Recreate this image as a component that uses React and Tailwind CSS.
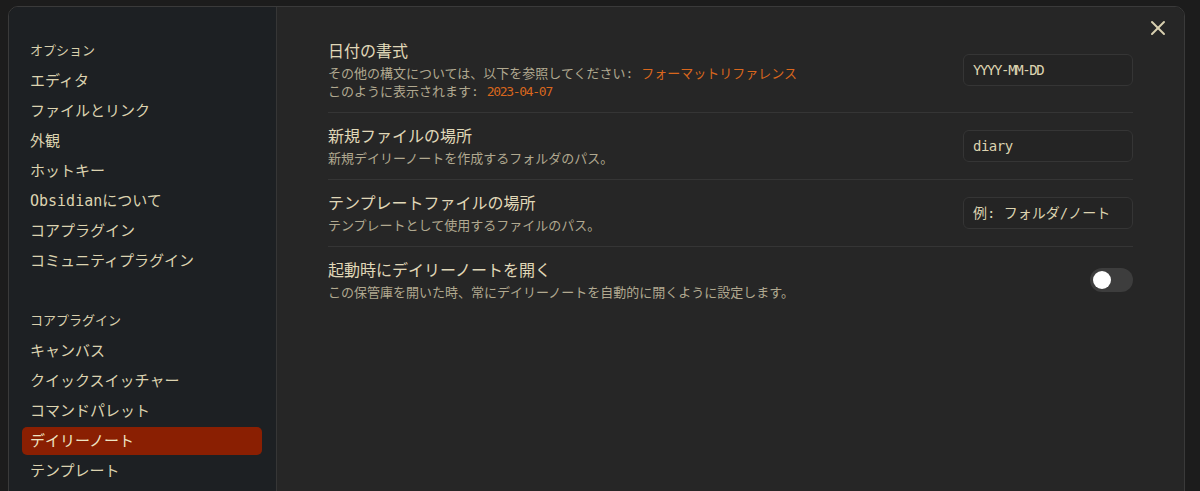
import React from "react";
import { X } from "lucide-react";

const FONT = { fontFamily: '"DejaVu Sans Mono", "Noto Sans CJK JP", monospace' };

const optionItems = ["エディタ", "ファイルとリンク", "外観", "ホットキー", "Obsidianについて", "コアプラグイン", "コミュニティプラグイン"];
const pluginItems = ["キャンバス", "クイックスイッチャー", "コマンドパレット", "デイリーノート", "テンプレート"];

const NavHeader = ({ children }) => (
  <div className="h-[28px] mb-[2px] pl-2 flex items-center text-[13px] text-[#d8cfac]">{children}</div>
);

const NavItem = ({ label, active }) => (
  <div
    className={
      active
        ? "h-[28px] mb-[2px] pl-2 flex items-center text-[15px] rounded-[5px] bg-[#8a1f02] text-[#eee5c4]"
        : "h-[28px] mb-[2px] pl-2 flex items-center text-[15px] text-[#dcd3b0]"
    }
  >
    {label}
  </div>
);

const SettingRow = ({ title, children, control, first }) => (
  <div className={first ? "flex items-center py-[11px]" : "flex items-center py-[11px] border-t border-[#353535]"}>
    <div className="flex-1">
      <div className="pt-[1px] text-[16px] leading-[24px] text-[#e0d8b8]">{title}</div>
      <div className="mt-[1px] text-[13px] leading-[18px] text-[#b1a990]">{children}</div>
    </div>
    {control}
  </div>
);

const TextBox = ({ children }) => (
  <div className="w-[170px] h-[32px] shrink-0 rounded-[6px] border border-[#353535] bg-[#242424] px-[9px] flex items-center text-[14px] text-[#dcd3b0]">
    {children}
  </div>
);

export default function App() {
  return (
    <div style={FONT} className="h-[491px] overflow-hidden bg-[#1c1c1c] pl-2 pr-[15px] pt-[6px]">
      <div className="relative flex h-[520px] rounded-t-[10px] border border-[#3a3a3a] overflow-hidden">
        <aside className="w-[268px] shrink-0 bg-[#1d2023] border-r border-[#363636] pl-[13px] pr-[14px] pt-[30px]">
          <NavHeader>オプション</NavHeader>
          {optionItems.map((l) => (
            <NavItem key={l} label={l} />
          ))}
          <div className="h-[30px]" />
          <NavHeader>コアプラグイン</NavHeader>
          {pluginItems.map((l) => (
            <NavItem key={l} label={l} active={l === "デイリーノート"} />
          ))}
        </aside>

        <main className="flex-1 bg-[#262626] px-[51px] pt-[21px]">
          <SettingRow
            first
            title="日付の書式"
            control={
              <TextBox>
                <span className="tracking-[-1.4px]">YYYY-MM-DD</span>
              </TextBox>
            }
          >
            <div>
              その他の構文については、以下を参照してください: <span className="text-[#d9661d]">フォーマットリファレンス</span>
            </div>
            <div>
              このように表示されます: <span className="text-[#d9661d] tracking-[-1.3px]">2023-04-07</span>
            </div>
          </SettingRow>
          <SettingRow
            title="新規ファイルの場所"
            control={
              <TextBox>
                <span className="tracking-[-0.5px]">diary</span>
              </TextBox>
            }
          >
            新規デイリーノートを作成するフォルダのパス。
          </SettingRow>
          <SettingRow title="テンプレートファイルの場所" control={<TextBox>例: フォルダ/ノート</TextBox>}>
            テンプレートとして使用するファイルのパス。
          </SettingRow>
          <SettingRow
            title="起動時にデイリーノートを開く"
            control={
              <div className="w-[43px] h-[24px] shrink-0 rounded-full bg-[#3d3d3d] flex items-center pl-[3px]">
                <div className="w-[18px] h-[18px] rounded-full bg-white" />
              </div>
            }
          >
            この保管庫を開いた時、常にデイリーノートを自動的に開くように設定します。
          </SettingRow>
        </main>

        <button className="absolute top-[9px] right-[14px] text-[#d8d0b0]">
          <X size={24} strokeWidth={2} />
        </button>
      </div>
    </div>
  );
}
